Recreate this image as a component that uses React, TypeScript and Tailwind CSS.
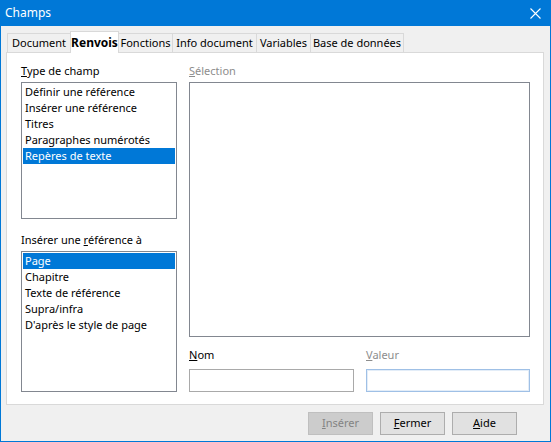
import { ReactNode } from 'react';

const font = { fontFamily: '"Noto Sans", "Open Sans", sans-serif' };

const tabs = [
  { label: 'Document', w: 'w-[64px]' },
  { label: 'Renvois', w: 'w-[49px]', active: true },
  { label: 'Fonctions', w: 'w-[55px]' },
  { label: 'Info document', w: 'w-[85px]' },
  { label: 'Variables', w: 'w-[55px]' },
  { label: 'Base de données', w: 'w-[94px]' },
];

const typeItems = [
  'Définir une référence',
  'Insérer une référence',
  'Titres',
  'Paragraphes numérotés',
  'Repères de texte',
];

const refItems = ['Page', 'Chapitre', 'Texte de référence', 'Supra/infra', "D'après le style de page"];

function ListBox({ items, selected, h }: { items: string[]; selected: number; h: string }) {
  return (
    <div className={`${h} border border-[#828790] bg-white p-px`}>
      {items.map((it, i) => (
        <div
          key={it}
          className={`h-[16px] pl-[2px] text-[11px] leading-[16px] whitespace-nowrap ${
            i === selected ? 'bg-[#0078d7] text-white' : 'text-black'
          }`}
        >
          {it}
        </div>
      ))}
    </div>
  );
}

function Label({ children, dim }: { children: ReactNode; dim?: boolean }) {
  return (
    <div className={`h-[16px] text-[11px] leading-[16px] whitespace-nowrap ${dim ? 'text-[#8d8d8d]' : 'text-black'}`}>
      {children}
    </div>
  );
}

function Btn({ children, disabled, w }: { children: ReactNode; disabled?: boolean; w: string }) {
  return (
    <div
      className={`${w} h-[23px] flex items-center justify-center border text-[11px] ${
        disabled ? 'bg-[#cccccc] border-[#bfbfbf] text-[#838383]' : 'bg-[#e1e1e1] border-[#adadad] text-black'
      }`}
    >
      {children}
    </div>
  );
}

export default function App() {
  return (
    <div className="w-[551px] h-[442px] flex flex-col bg-[#0078d7]" style={font}>
      <div className="h-[26px] flex items-center justify-between pl-[5px] pr-[10px] text-white text-[12px]">
        <span>Champs</span>
        <svg width="11" height="11" viewBox="0 0 11 11">
          <path d="M0.5 0.5 L10.5 10.5 M10.5 0.5 L0.5 10.5" stroke="white" strokeWidth="1.1" />
        </svg>
      </div>

      <div className="flex-1 mx-px mb-px bg-[#f0f0f0] flex flex-col">
        <div className="mt-[5px] h-[21px] pl-[6px] flex items-end">
          {tabs.map((t) =>
            t.active ? (
              <div
                key={t.label}
                className={`${t.w} h-[22px] -mb-px -ml-px relative z-10 bg-white border border-b-0 border-[#d9d9d9] flex items-center justify-center whitespace-nowrap text-[12px] font-bold text-black`}
              >
                {t.label}
              </div>
            ) : (
              <div
                key={t.label}
                className={`${t.w} h-[19px] -ml-px first:ml-0 border border-b-0 border-[#d9d9d9] bg-[#f0f0f0] flex items-center justify-center whitespace-nowrap text-[11px] text-black`}
              >
                {t.label}
              </div>
            )
          )}
        </div>

        <div className="ml-[5px] w-[538px] h-[353px] border border-[#d9d9d9] bg-white pt-[10px] pl-[14px] flex gap-[12px]">
          <div className="w-[156px] flex flex-col">
            <Label>
              <span className="underline">T</span>ype de champ
            </Label>
            <div className="mt-[3px]">
              <ListBox items={typeItems} selected={4} h="h-[137px]" />
            </div>
            <div className="mt-[13px]">
              <Label>
                Insérer une <span className="underline">r</span>éférence à
              </Label>
            </div>
            <div className="mt-[3px]">
              <ListBox items={refItems} selected={0} h="h-[141px]" />
            </div>
          </div>

          <div className="w-[341px] flex flex-col">
            <Label dim>
              <span className="underline">S</span>élection
            </Label>
            <div className="mt-[3px] h-[255px] border border-[#828790] bg-white" />
            <div className="mt-[10px] flex gap-[12px]">
              <div className="w-[165px] flex flex-col">
                <Label>
                  <span className="underline">N</span>om
                </Label>
                <div className="mt-[6px] h-[23px] border border-[#a9a9a9] bg-white" />
              </div>
              <div className="w-[164px] flex flex-col">
                <Label dim>
                  <span className="underline">V</span>aleur
                </Label>
                <div className="mt-[6px] h-[23px] border border-[#9fc0e6] bg-white shadow-[inset_0_0_0_1px_#e3edf8]" />
              </div>
            </div>
          </div>
        </div>

        <div className="mt-[7px] flex justify-end gap-[7px] pr-[33px]">
          <Btn w="w-[65px]" disabled>
            <span className="underline">I</span>nsérer
          </Btn>
          <Btn w="w-[65px]">
            <span className="underline">F</span>ermer
          </Btn>
          <Btn w="w-[65px]">
            <span className="underline">A</span>ide
          </Btn>
        </div>
      </div>
    </div>
  );
}
